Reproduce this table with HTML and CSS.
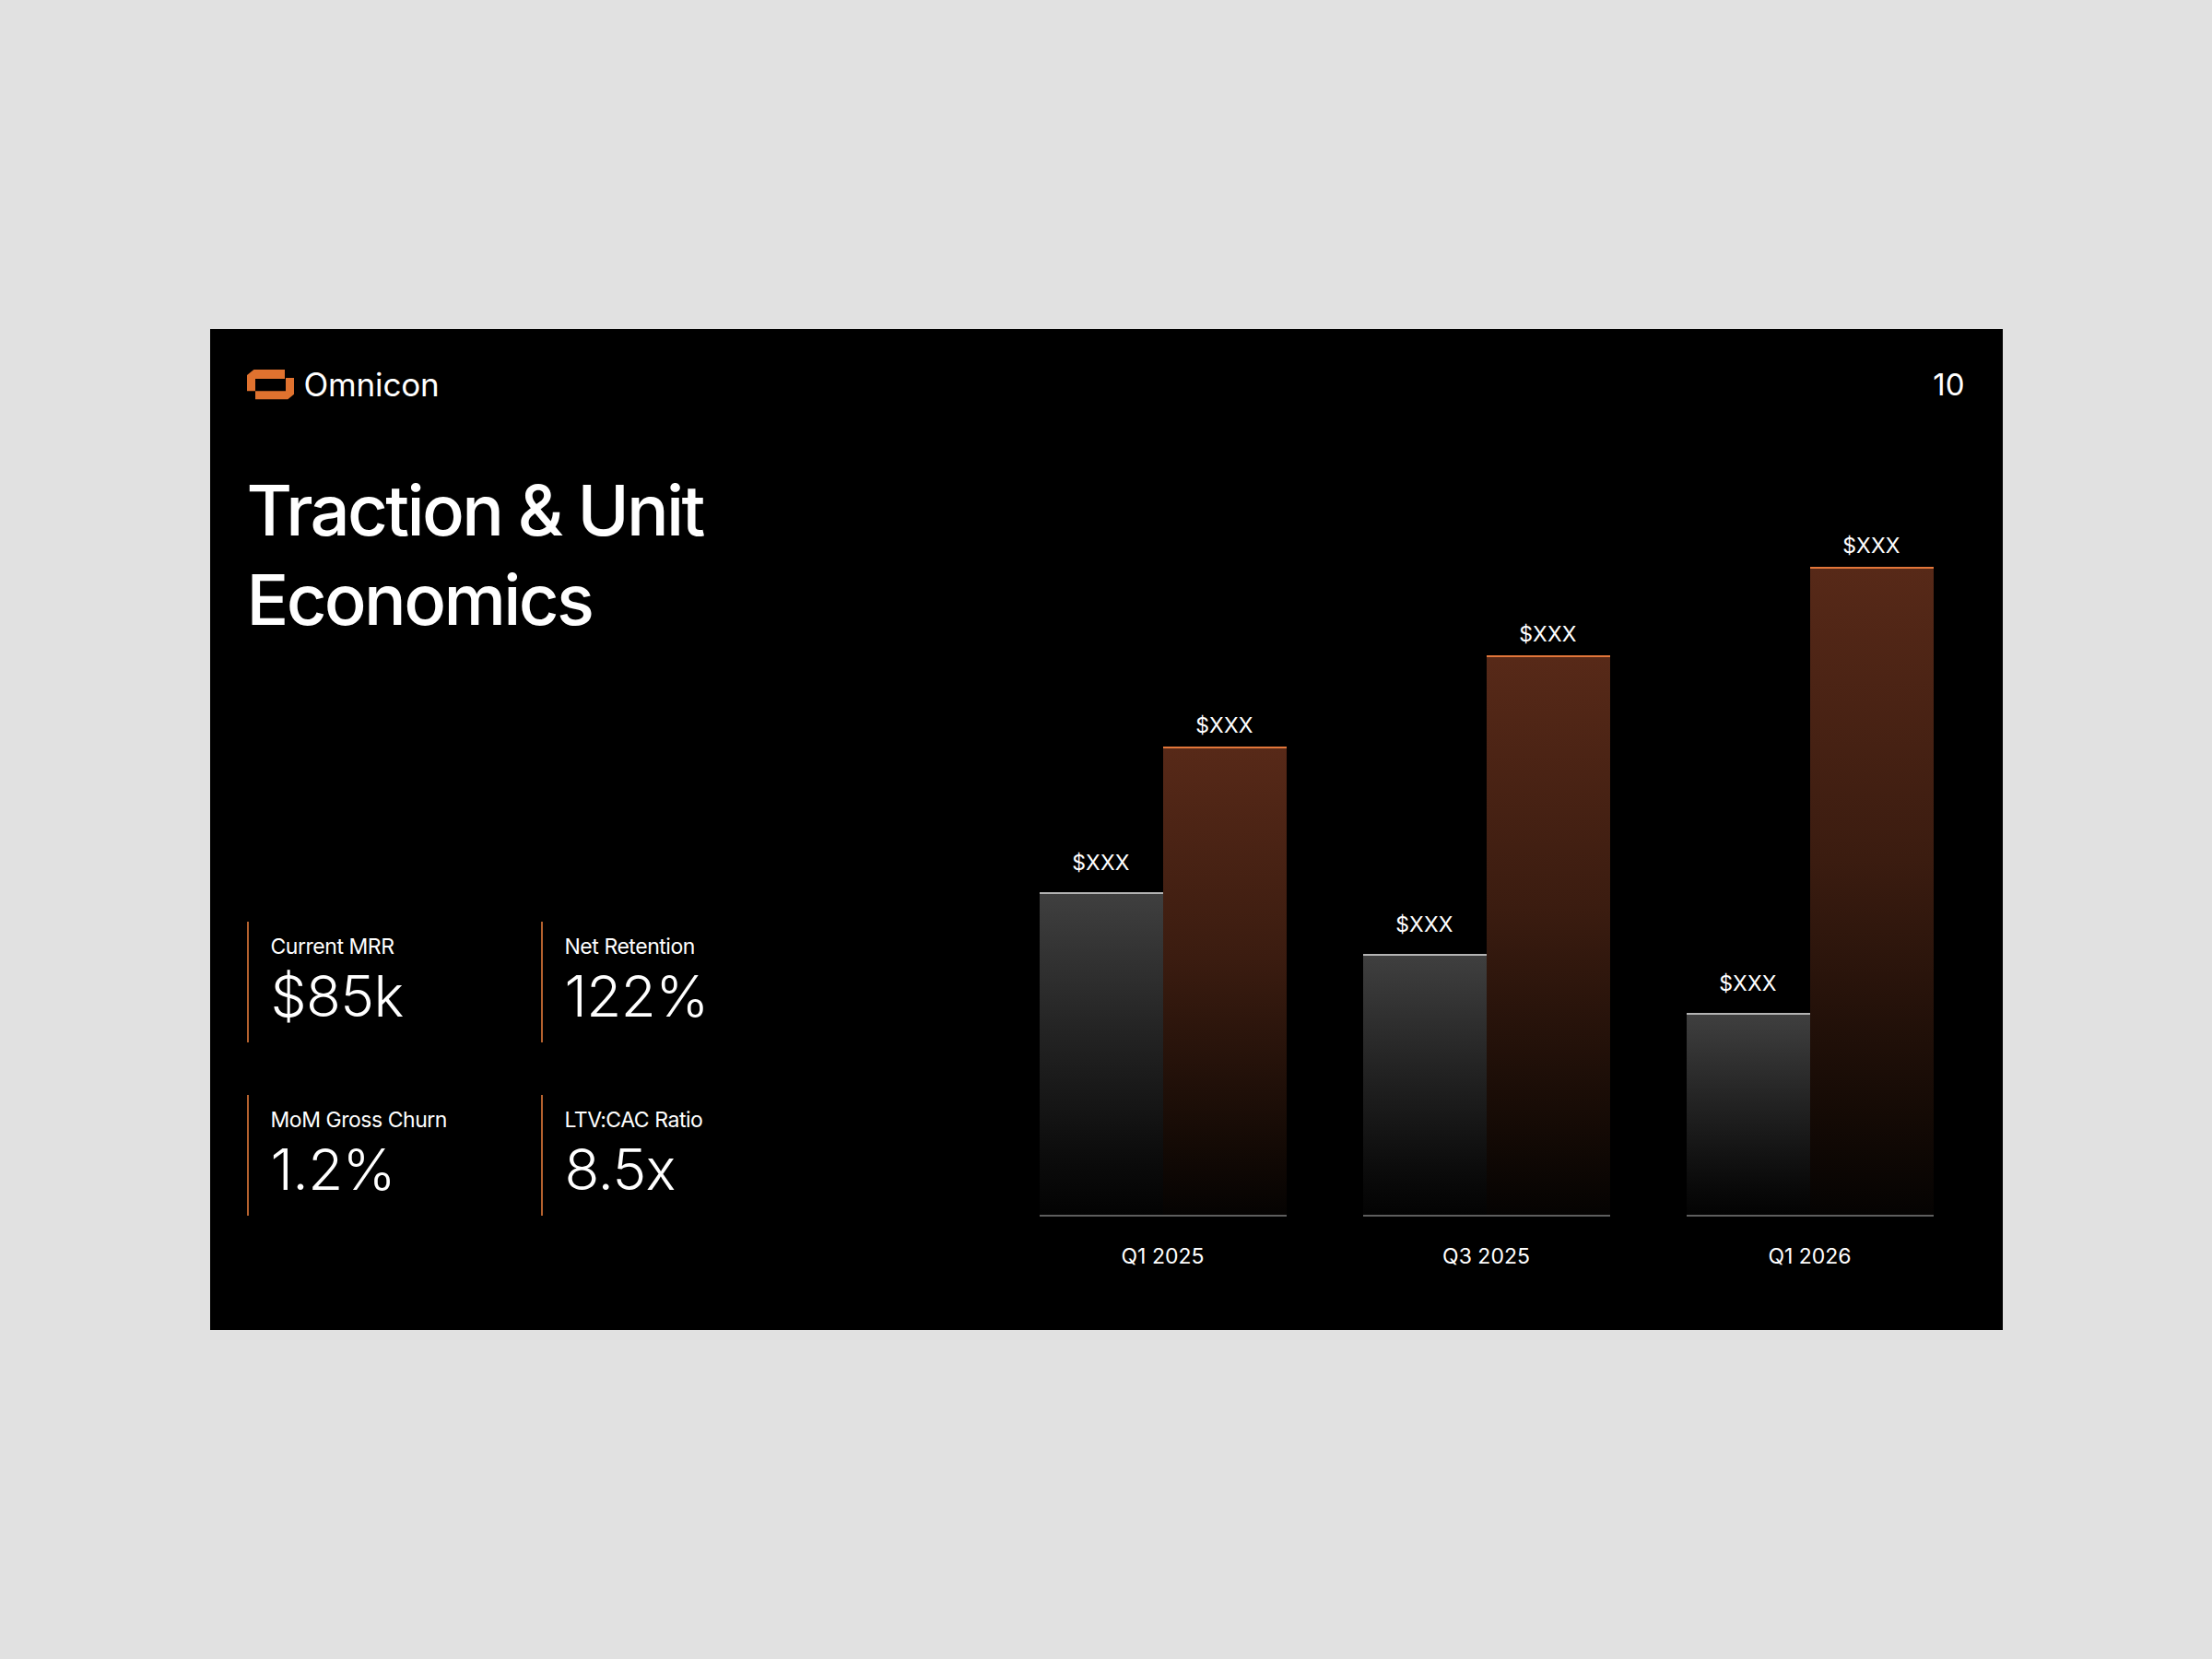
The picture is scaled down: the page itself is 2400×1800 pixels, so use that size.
FILE: index.html
```html
<!DOCTYPE html>
<html lang="en">
<head>
<meta charset="utf-8">
<title>Traction &amp; Unit Economics</title>
<link rel="stylesheet" href="styles.css">
</head>
<body>
<div class="slide">
  <header class="header">
    <div class="brand">
      <svg class="logo" viewBox="0 0 51 33" width="51" height="33" aria-hidden="true">
        <polygon points="0,6 7.4,0 41,0 41,10 9,10 9,23.3 0,23.3" fill="#e0722f"/>
        <polygon points="42,9 51,9 51,26.7 44.3,32.3 9,32.3 9,23.3 42,23.3" fill="#e0722f"/>
      </svg>
      <span class="brand-name">Omnicon</span>
    </div>
    <div class="page-num">10</div>
  </header>
  <main class="body">
    <section class="left">
      <h1 class="title">Traction &amp; Unit<br>Economics</h1>
      <div class="metrics">
        <div class="metric">
          <div class="metric-label">Current MRR</div>
          <div class="metric-value">$85k</div>
        </div>
        <div class="metric">
          <div class="metric-label">Net Retention</div>
          <div class="metric-value">122%</div>
        </div>
        <div class="metric">
          <div class="metric-label">MoM Gross Churn</div>
          <div class="metric-value">1.2%</div>
        </div>
        <div class="metric">
          <div class="metric-label">LTV:CAC Ratio</div>
          <div class="metric-value">8.5x</div>
        </div>
      </div>
    </section>
    <section class="chart">
      <div class="group">
        <div class="bars">
          <div class="bar-col">
            <div class="val val-gray">$XXX</div>
            <div class="bar bar-gray" style="height:350px"></div>
          </div>
          <div class="bar-col">
            <div class="val val-orange">$XXX</div>
            <div class="bar bar-orange" style="height:508px"></div>
          </div>
        </div>
        <div class="axis"></div>
        <div class="cat">Q1 2025</div>
      </div>
      <div class="group">
        <div class="bars">
          <div class="bar-col">
            <div class="val val-gray">$XXX</div>
            <div class="bar bar-gray" style="height:283px"></div>
          </div>
          <div class="bar-col">
            <div class="val val-orange">$XXX</div>
            <div class="bar bar-orange" style="height:607px"></div>
          </div>
        </div>
        <div class="axis"></div>
        <div class="cat">Q3 2025</div>
      </div>
      <div class="group">
        <div class="bars">
          <div class="bar-col">
            <div class="val val-gray">$XXX</div>
            <div class="bar bar-gray" style="height:219px"></div>
          </div>
          <div class="bar-col">
            <div class="val val-orange">$XXX</div>
            <div class="bar bar-orange" style="height:703px"></div>
          </div>
        </div>
        <div class="axis"></div>
        <div class="cat">Q1 2026</div>
      </div>
    </section>
  </main>
</div>
</body>
</html>
```

FILE: styles.css
```css
html, body {
  margin: 0;
  padding: 0;
}
body {
  background: #e1e1e1;
  font-family: Inter, "Noto Sans", "Liberation Sans", sans-serif;
  color: #ffffff;
  width: 2400px;
  height: 1800px;
  overflow: hidden;
}
.slide {
  box-sizing: border-box;
  width: 1945px;
  height: 1086px;
  margin: 357px auto 0;
  background: #000000;
  padding: 44px 41px 66px 40px;
  display: flex;
  flex-direction: column;
}
.header {
  display: flex;
  justify-content: space-between;
  align-items: flex-start;
  height: 33px;
}
.brand {
  display: flex;
  align-items: center;
  gap: 11px;
}
.logo {
  display: block;
}
.brand-name {
  font-size: 35px;
  line-height: 33px;
  font-weight: 400;
  letter-spacing: -0.005em;
}
.page-num {
  font-size: 33px;
  line-height: 33px;
  font-weight: 400;
}
.body {
  flex: 1;
  display: flex;
  min-height: 0;
}
.left {
  display: flex;
  flex-direction: column;
}
.title {
  margin: 71px 0 0;
  font-size: 76px;
  line-height: 97px;
  font-weight: 450;
  letter-spacing: -0.035em;
}
.metrics {
  margin-top: auto;
  margin-bottom: 58px;
  display: grid;
  grid-template-columns: 319px 319px;
  row-gap: 57px;
}
.metric {
  border-left: 2px solid #b4612e;
  padding: 13px 0 17px 24px;
}
.metric-label {
  font-size: 23px;
  line-height: 28px;
  font-weight: 400;
  letter-spacing: -0.02em;
}
.metric-value {
  margin-top: 7px;
  font-size: 62px;
  line-height: 66px;
  font-weight: 300;
  letter-spacing: -0.01em;
}
.chart {
  margin-left: auto;
  margin-right: 34px;
  align-self: flex-end;
  display: flex;
  align-items: flex-end;
  gap: 83px;
}
.group {
  width: 268px;
  display: flex;
  flex-direction: column;
}
.bars {
  display: flex;
  align-items: flex-end;
}
.bar-col {
  width: 134px;
  display: flex;
  flex-direction: column;
  align-items: center;
}
.val {
  font-size: 23px;
  line-height: 28px;
  font-weight: 400;
  letter-spacing: 0.01em;
}
.val-gray {
  margin-bottom: 18px;
}
.val-orange {
  margin-bottom: 9px;
}
.bar {
  box-sizing: border-box;
  width: 134px;
}
.bar-gray {
  border-top: 2px solid #b3b3b3;
  background: linear-gradient(to bottom, #3f3f3f 0%, #222222 45%, #0a0a0a 85%, #030303 100%);
}
.bar-orange {
  border-top: 2px solid #e2763a;
  background: linear-gradient(to bottom, #572918 0%, #3b1c10 45%, #140a05 85%, #050302 100%);
}
.axis {
  height: 2px;
  background: #5e5e5e;
}
.cat {
  margin-top: 29px;
  text-align: center;
  font-size: 23px;
  line-height: 28px;
  font-weight: 400;
}
```
